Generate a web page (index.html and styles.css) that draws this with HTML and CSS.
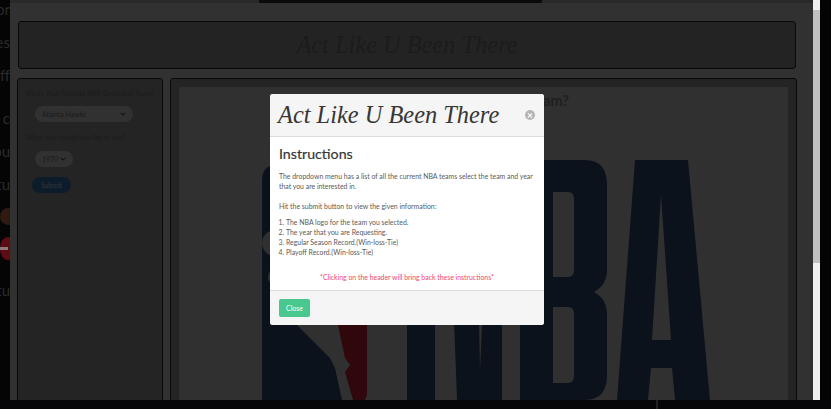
FILE: index.html
```html
<!DOCTYPE html>
<html lang="en">
<head>
<meta charset="utf-8">
<title>Act Like U Been There</title>
<link rel="stylesheet" href="styles.css">
</head>
<body>
<div class="screen">
  <aside class="gutter">
    <span>or</span><span>es</span><span>ff</span><span>r c</span><span>ou</span><span>tu</span>
    <i class="dot orange"></i><i class="dot red"></i>
    <span>tu</span>
  </aside>
  <div class="page">
    <div class="topbar"><div class="topbar-mid"></div></div>
    <header class="title-panel"><h1>Act Like U Been There</h1></header>
    <div class="columns">
      <section class="side">
        <p class="q">Who's Your Favorite NBA Basketball Team?</p>
        <div class="pill team">Atlanta Hawks<svg class="chev" viewBox="0 0 8 5"><path d="M1 1l3 3 3-3" fill="none" stroke="#555" stroke-width="1.4"/></svg></div>
        <p class="q q2">What year would you like to see?</p>
        <div class="pill year">1970<svg class="chev" viewBox="0 0 8 5"><path d="M1 1l3 3 3-3" fill="none" stroke="#555" stroke-width="1.4"/></svg></div>
        <button class="submit">Submit</button>
      </section>
      <section class="result">
        <div class="canvas">
          <h2>Who's Your Favorite NBA Basketball Team?</h2>
          <svg class="logo" viewBox="262 110 458 290" width="458" height="290">
            <path fill="#3c5a87" d="M262 180Q262 165 277 165H300V325H297L330 358L335 368L342 400H262Z"/>
            <ellipse cx="275" cy="243" rx="13" ry="13" fill="#f0f0f0"/>
            <ellipse cx="280" cy="277" rx="12" ry="10" fill="#f0f0f0"/>
            <path fill="#f02838" d="M320 165H367V395L365 400H353L345 372L350 365L345 358L338 325Z"/>
            <path fill="#3c5a87" d="M407 160H435V400H407ZM448 160H476L480 370L482 325V160H502V400H457Z"/>
            <path fill="#3c5a87" fill-rule="evenodd" d="M520 160H585Q607 160 607 185V270Q607 285 594 292Q607 299 607 314V375Q607 400 585 400H520ZM553 192V277H568Q574 277 574 270V199Q574 192 568 192ZM553 307V383H568Q574 383 574 376V314Q574 307 568 307Z"/>
            <path fill="#3c5a87" fill-rule="evenodd" d="M635 160H688L710 400H675L672 368H651L648 400H617ZM661 195L652 340H671Z"/>
          </svg>
        </div>
      </section>
    </div>
    <div class="backdrop">
      <div class="modal">
        <div class="modal-head">
          <p class="modal-title">Act Like U Been There</p>
          <span class="delete"></span>
        </div>
        <div class="modal-body">
          <h3>Instructions</h3>
          <p>The dropdown menu has a list of all the current NBA teams select the team and year that you are interested in.</p>
          <p class="gap">Hit the submit button to view the given information:</p>
          <ol>
            <li>The NBA logo for the team you selected.</li>
            <li>The year that you are Requesting.</li>
            <li>Regular Season Record.(Win-loss-Tie)</li>
            <li>Playoff Record.(Win-loss-Tie)</li>
          </ol>
          <p class="note">*Clicking on the header will bring back these instructions*</p>
        </div>
        <div class="modal-foot"><button class="close">Close</button></div>
      </div>
    </div>
  </div>
  <div class="scrollbar"><div class="cap"></div><div class="thumb"></div></div>
  <div class="right-gutter"></div>
</div>
<div class="bottom"><i class="mark"></i></div>
</body>
</html>
```

FILE: styles.css
```css
* { box-sizing: border-box; }
html, body { margin: 0; height: 409px; overflow: hidden; background: #050506; font-family: Lato, "Open Sans", sans-serif; }
.screen { display: flex; height: 400px; }
.gutter { width: 10px; overflow: hidden; display: flex; flex-direction: column; align-items: flex-end; color: #2b2b2b; font-size: 15px; line-height: 18px; white-space: nowrap; }
.gutter span { height: 33px; flex: none; }
.gutter span:nth-child(4) { margin-top: 10px; }
.gutter .dot { flex: none; width: 16px; border-radius: 50%; margin-right: -6px; }
.gutter .orange { background: #2e1a10; height: 17px; }
.gutter .red { background: #5c0c12; height: 23px; margin-top: 12px; margin-bottom: 21px; position: relative; }
.gutter .red::after { content: ""; position: absolute; left: 0; top: 10px; width: 8px; height: 3px; background: #8a7a7a; }
.page { position: relative; width: 803px; overflow: hidden; background: #f6f6f6; padding: 0 16px 0 7px; }
.topbar { height: 3px; margin: 0 -16px 18px -7px; background: #ccc; padding-left: 249px; }
.topbar-mid { width: 283px; height: 3px; background: #333; }
.title-panel { height: 48px; margin: 0 1px 9px 1px; background: #afafaf; border: 1px solid #2a2a2a; border-radius: 3px; display: flex; align-items: center; justify-content: center; }
h1 { margin: 0; font: italic 400 24.4px "Liberation Serif", serif; color: #888; }
.columns { display: flex; gap: 7px; height: 340px; }
.side { width: 146px; flex: none; background: #b2b2b2; border: 1px solid #2a2a2a; border-radius: 3px; padding: 9px 7px; color: #8a8a8a; font-size: 6.9px; }
.q { margin: 0 0 8px; line-height: 10px; white-space: nowrap; }
.q2 { margin: 10px 0 9px 1px; }
.pill { display: flex; align-items: center; justify-content: space-between; background: #f2f2f2; border-radius: 9px; margin-left: 10px; height: 16px; color: #888; padding: 0 7px; }
.team { width: 98px; }
.year { width: 38px; }
.chev { width: 6px; height: 4px; }
.submit { display: block; margin: 10px 0 0 7px; width: 39px; height: 16px; padding: 0; border: 0; border-radius: 9px; background: #3e8ed0; color: #fff; font: 6.9px Lato, sans-serif; }
.result { flex: 1; background: #b2b2b2; border: 1px solid #2a2a2a; border-radius: 3px; padding: 8px; }
.canvas { background: #f0f0f0; height: 100%; overflow: hidden; }
h2 { margin: 5px 0 0; padding-right: 219px; text-align: right; font: 700 14.5px/17px Lato, sans-serif; color: #999; white-space: nowrap; }
.logo { display: block; margin: 1px 0 0 83px; }
.backdrop { position: absolute; inset: 0; background: rgba(0,0,0,.8); padding: 94px 0 0 260px; }
.modal { width: 274px; height: 231px; border-radius: 3px; overflow: hidden; display: flex; flex-direction: column; background: #fff; }
.modal-head { height: 43px; flex: none; background: #f5f5f5; border-bottom: 1px solid #dbdbdb; display: flex; align-items: center; justify-content: space-between; padding: 0 9px 0 8px; }
.modal-title { margin: 0; font: italic 400 24.4px "Liberation Serif", serif; color: #363636; white-space: nowrap; }
.delete { width: 10px; height: 10px; border-radius: 50%; background: #b5b5b5; position: relative; }
.delete::before, .delete::after { content: ""; position: absolute; left: 2px; top: 4.5px; width: 6px; height: 1px; background: #fff; transform: rotate(45deg); }
.delete::after { transform: rotate(-45deg); }
.modal-body { flex: 1; padding: 7px 9px 0; font-size: 6.9px; line-height: 10.2px; color: #5a5a5a; }
.modal-body p { margin: 0; }
h3 { margin: 0 0 7px; font: 400 14.2px/20px Lato, sans-serif; color: #363636; -webkit-text-stroke: .2px #363636; }
.modal-body .gap { margin-top: 10px; }
ol { margin: 5px 0 0; padding: 0 0 0 7px; }
.modal-body .note { margin-top: 15px; text-align: center; color: #f14668; }
.modal-foot { height: 35px; flex: none; background: #f5f5f5; border-top: 1px solid #dbdbdb; padding: 8px 9px; }
.close { display: block; width: 31px; height: 18px; padding: 0; border: 0; border-radius: 2px; background: #48c78e; color: #fff; font: 6.9px Lato, sans-serif; }
.scrollbar { width: 7px; flex: none; background: #f1f1f1; padding-top: 4px; }
.cap { height: 6px; }
.thumb { height: 253px; background: #c1c1c1; }
.right-gutter { flex: 1; background: #040405; }
.bottom { height: 9px; background: #060608; padding-left: 656px; }
.mark { display: block; width: 2px; height: 9px; background: #222; }
```
